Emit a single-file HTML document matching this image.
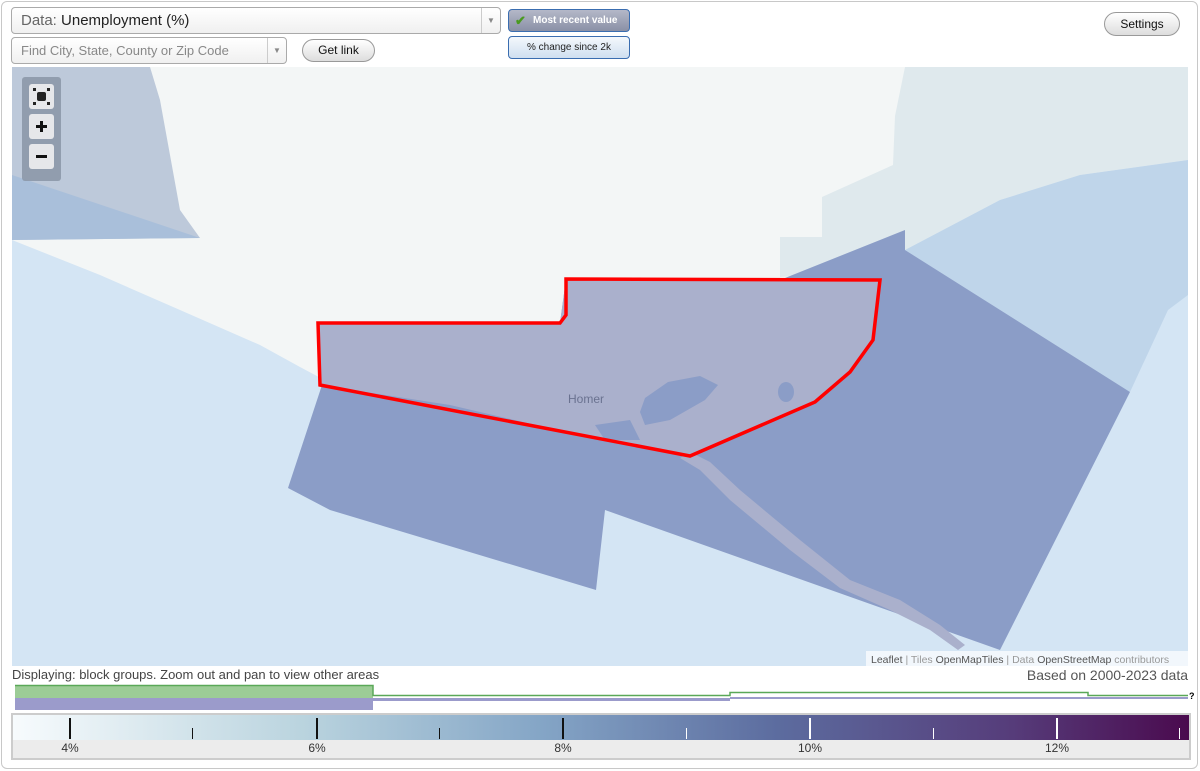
<!DOCTYPE html>
<html><head><meta charset="utf-8"><style>
*{box-sizing:border-box;margin:0;padding:0}
body{width:1200px;height:771px;background:#fff;font-family:"Liberation Sans",Arial,sans-serif;position:relative;overflow:hidden}
.frame{position:absolute;left:1px;top:1px;width:1197px;height:768px;border:1px solid #c8c8c8;border-radius:6px}
.sel{position:absolute;background:#fff;border:1px solid #aaa;border-radius:4px;background:linear-gradient(#fff,#f0f0f0)}
.arrow{position:absolute;right:0;top:0;bottom:0;width:19px;border-left:1px solid #ccc;color:#888;font-size:8px;text-align:center}
.btn{position:absolute;border:1px solid #999;border-radius:12px;background:linear-gradient(#fff,#ddd);font-size:12px;text-align:center;color:#111}
.t{position:absolute;white-space:nowrap}
</style></head><body>
<div class="frame"></div>
<div class="sel" style="left:11px;top:7px;width:490px;height:27px"><span class="t" style="left:9px;top:4px;font-size:15px;color:#666">Data: <span style="color:#222">Unemployment (%)</span></span><div class="arrow" style="line-height:25px">▼</div></div>
<div class="sel" style="left:11px;top:37px;width:276px;height:27px"><span class="t" style="left:9px;top:5px;font-size:13px;color:#888">Find City, State, County or Zip Code</span><div class="arrow" style="line-height:25px">▼</div></div>
<div class="btn" style="left:302px;top:39px;width:73px;height:23px;line-height:21px">Get link</div>
<div style="position:absolute;left:508px;top:9px;width:122px;height:23px;border:1px solid #3a6db0;border-radius:4px;background:linear-gradient(#b4b8c8,#8a90a6);color:#fff;font-size:10px;font-weight:bold;line-height:21px;padding-left:24px">Most recent value<span style="position:absolute;left:6px;top:0;color:#4a9a20;font-size:13px">✔</span></div>
<div style="position:absolute;left:508px;top:36px;width:122px;height:23px;border:1px solid #3a6db0;border-radius:4px;background:linear-gradient(#f4f8fc,#cfdff0);color:#222;font-size:10px;line-height:21px;text-align:center">% change since 2k</div>
<div class="btn" style="left:1104px;top:12px;width:76px;height:24px;line-height:22px">Settings</div>

<svg style="position:absolute;left:12px;top:67px" width="1176" height="599" viewBox="12 67 1176 599">
<rect x="12" y="67" width="1176" height="599" fill="#d4e5f4"/>
<path d="M12 67H1188V160L1080 175L1000 200L905 250L880 282L860 350L820 400L690 455L600 440L450 405L330 383L300 367L260 345L180 310L100 275L12 240Z" fill="#f3f6f6"/>
<path d="M905 67H1188V160L1080 175L1000 200L905 250L895 245L820 275L780 277V237H822V197L893 165L895 116Z" fill="#dfe9ed"/>
<path d="M905 250L1000 200L1080 175L1188 160V295L1168 310L1130 392Z" fill="#bfd5ea"/>
<path d="M12 67H150L160 100L180 210L200 238L12 240Z" fill="#bdc9da"/>
<path d="M12 175L200 238L12 240Z" fill="#a9bfda"/>
<path d="M905 250L1130 392L1000 650L605 510L596 590L330 510L288 488L322 385L318 323L560 323L566 279L780 280L905 230Z" fill="#8b9dc7"/>
<path d="M318 323L560 323L566 279L880 280L873 340L850 372L815 402L690 456L600 440L450 405L320 385Z" fill="#aab0cc"/>
<path d="M690 452L710 462L740 490L800 540L850 580L900 600L940 625L965 645L958 650L930 630L890 610L840 588L790 550L730 500L700 470L680 458Z" fill="#aab0cc"/>
<path d="M645 398L668 382L700 376L718 385L705 400L670 420L645 425L640 412Z" fill="#8b9dc7"/>
<path d="M595 425L630 420L640 440L605 440Z" fill="#8b9dc7"/>
<ellipse cx="786" cy="392" rx="8" ry="10" fill="#8b9dc7"/>
<path d="M318 323L560 323L566 315L566 279L880 280L873 340L850 372L815 402L690 456L320 385Z" fill="none" stroke="#f00" stroke-width="3.5" stroke-linejoin="miter"/>
<text x="568" y="403" font-family="Liberation Sans" font-size="12" fill="#6a7290">Homer</text>
<rect x="22" y="77" width="39" height="104" rx="3" fill="#8a95a6" opacity=".85"/>
<rect x="29" y="84" width="25" height="25" rx="3" fill="#e6e7ea"/>
<rect x="37" y="92" width="9" height="9" rx="2" fill="#222"/>
<g fill="#222"><rect x="33" y="88" width="3" height="3"/><rect x="47" y="88" width="3" height="3"/><rect x="33" y="102" width="3" height="3"/><rect x="47" y="102" width="3" height="3"/></g>
<rect x="29" y="114" width="25" height="25" rx="3" fill="#e6e7ea"/>
<path d="M41.5 121v11M36 126.5h11" stroke="#111" stroke-width="3"/>
<rect x="29" y="144" width="25" height="25" rx="3" fill="#e6e7ea"/>
<path d="M36 156.5h11" stroke="#111" stroke-width="3"/>
<rect x="866" y="651" width="322" height="15" fill="#fff" opacity=".7"/>
<text x="871" y="663" font-family="Liberation Sans" font-size="10.5" fill="#999"><tspan fill="#555">Leaflet</tspan> | Tiles <tspan fill="#555">OpenMapTiles</tspan> | Data <tspan fill="#555">OpenStreetMap</tspan> contributors</text>
</svg>

<span class="t" style="left:12px;top:667px;font-size:13px;color:#444">Displaying: block groups. Zoom out and pan to view other areas</span>
<span class="t" style="right:12px;top:667px;font-size:14px;color:#555">Based on 2000-2023 data</span>
<svg style="position:absolute;left:0;top:682px" width="1200" height="32">
<rect x="15" y="3" width="358" height="13" fill="#9ccc96"/>
<path d="M15 3.5H373V13.5H730V10.5H1088V13.5H1188" fill="none" stroke="#5aa858" stroke-width="1.5"/>
<rect x="15" y="16" width="358" height="12" fill="#9b9bcb"/>
<rect x="373" y="16" width="357" height="3" fill="#9b9bcb"/>
<rect x="730" y="15" width="458" height="2" fill="#9b9bcb"/>
<text x="1189" y="17" font-size="9" font-weight="bold" font-family="Liberation Sans">?</text>
</svg>
<div style="position:absolute;left:11px;top:713px;width:1180px;height:47px;border:2px solid #ccc;background:#ececec"></div>
<svg style="position:absolute;left:13px;top:715px" width="1176" height="43">
<defs><linearGradient id="g"><stop offset="0" stop-color="#f7fbfd"/><stop offset=".25" stop-color="#b9d3de"/><stop offset=".45" stop-color="#84a5c6"/><stop offset=".65" stop-color="#5c6c9f"/><stop offset=".85" stop-color="#563c7a"/><stop offset="1" stop-color="#4a0a4e"/></linearGradient></defs>
<rect x="0" y="0" width="1176" height="25" fill="url(#g)"/>
<g stroke="#111" stroke-width="2"><path d="M57 3V24M304 3V24M550 3V24"/></g>
<g stroke="#111" stroke-width="1"><path d="M179.5 13V24M426.5 13V24"/></g>
<g stroke="#fff" stroke-width="2"><path d="M797 3V24M1044 3V24"/></g>
<g stroke="#fff" stroke-width="1"><path d="M673.5 13V24M920.5 13V24M1166.5 13V24"/></g>
<g font-family="Liberation Sans" font-size="12" fill="#333" text-anchor="middle"><text x="57" y="37">4%</text><text x="304" y="37">6%</text><text x="550" y="37">8%</text><text x="797" y="37">10%</text><text x="1044" y="37">12%</text></g>
</svg>
</body></html>
